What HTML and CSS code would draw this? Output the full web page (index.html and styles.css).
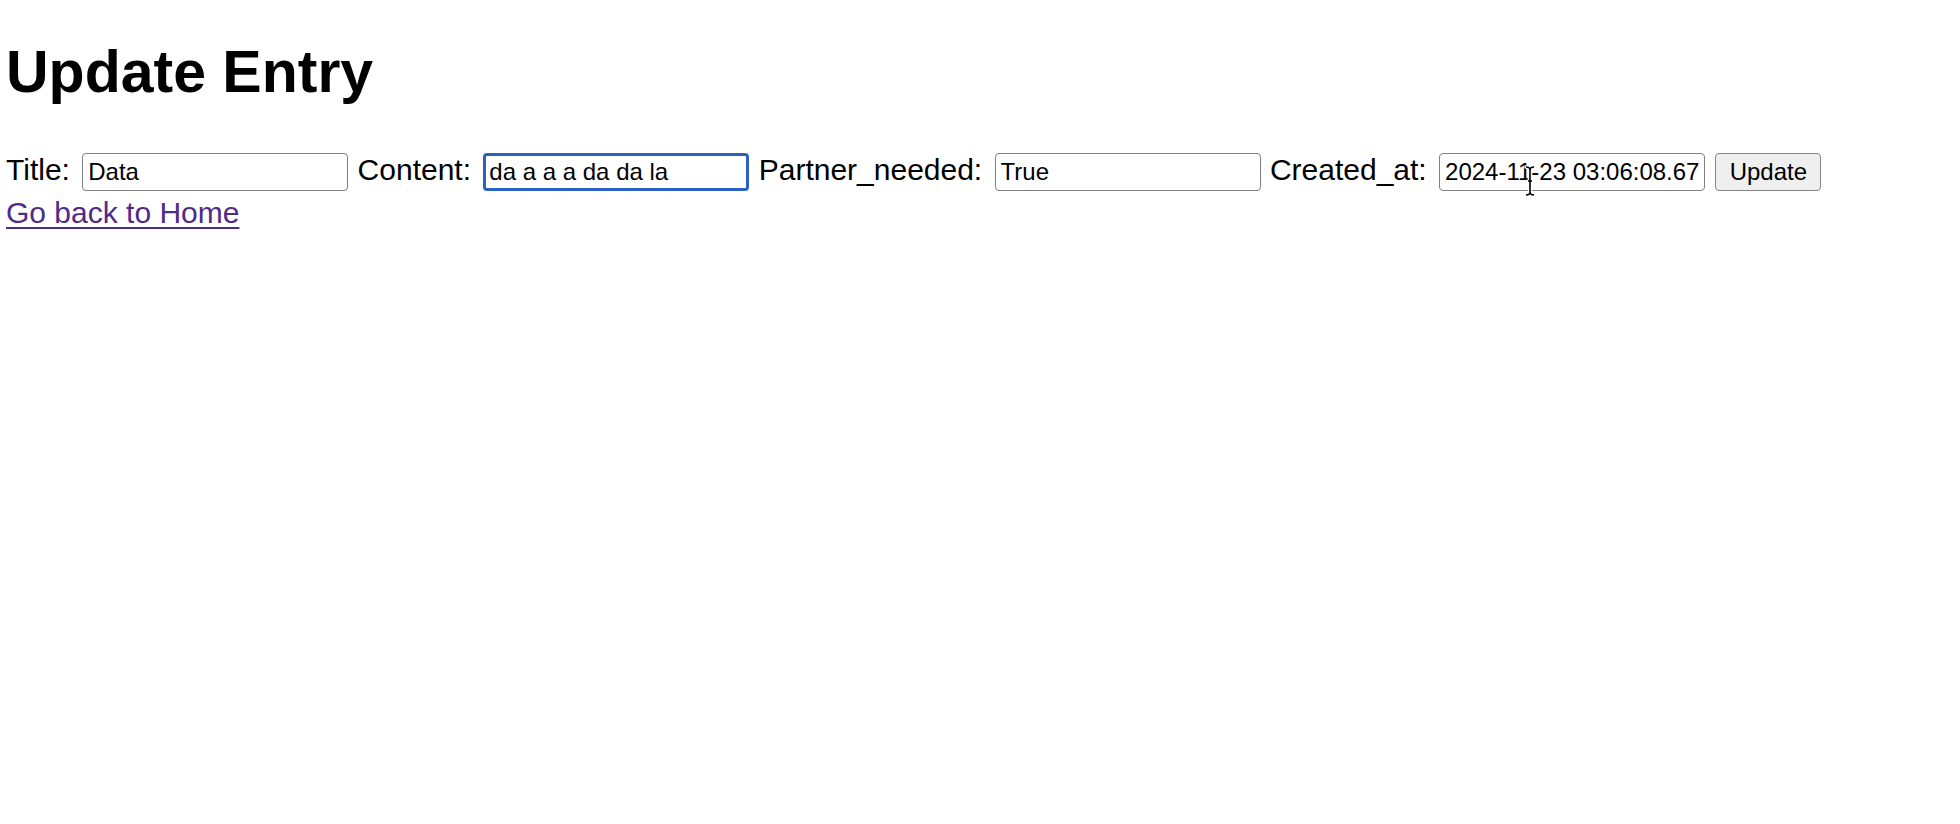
FILE: index.html
```
<!DOCTYPE html>
<html>
<head>
<meta charset="utf-8">
<title>Update Entry</title>
<link rel="stylesheet" href="styles.css">
</head>
<body>
<h1 class="title">Update Entry</h1>
<form class="entry-form">
<label class="lbl">Title:</label> <input class="field" type="text" value="Data"> <label class="lbl">Content:</label> <input class="field focused" type="text" value="da a a a da da la"> <label class="lbl">Partner_needed:</label> <input class="field" type="text" value="True"> <label class="lbl">Created_at:</label> <span class="field-wrap"><input class="field" type="text" value="2024-11-23 03:06:08.678"><svg class="cursor" width="12" height="32" viewBox="0 0 12 32"><path d="M2 2 Q6 2 6 5 Q6 2 10 2 M6 5 V27 M2 30 Q6 30 6 27 Q6 30 10 30 M4 16 H8" fill="none" stroke="#fff" stroke-width="3.5" stroke-linecap="round"/><path d="M2 2 Q6 2 6 5 Q6 2 10 2 M6 5 V27 M2 30 Q6 30 6 27 Q6 30 10 30 M4 16 H8" fill="none" stroke="#000" stroke-width="1.6"/></svg></span> <button class="btn" type="button">Update</button>
</form>
<a class="home-link" href="#">Go back to Home</a>
</body>
</html>
```
FILE: styles.css
```
html, body {
  background: #ffffff;
}
body {
  margin: 0;
  padding: 0 6px;
  font-family: "Liberation Sans", Arial, Helvetica, sans-serif;
  font-size: 30px;
  color: #000;
}
.title {
  font-size: 59px;
  font-weight: bold;
  margin: 38px 0 47px;
  line-height: normal;
}
.entry-form {
  margin: 0 0 5px;
  white-space: nowrap;
}
.lbl {
  font-size: 30px;
}
.field {
  box-sizing: border-box;
  width: 266px;
  height: 38px;
  font-family: "Liberation Sans", Arial, Helvetica, sans-serif;
  font-size: 24px;
  padding: 0 5px;
  border: 1.5px solid #808080;
  border-radius: 4px;
  background: #fff;
  color: #000;
  margin: 0 1px 0 4px;
  outline: none;
}
.field.focused {
  border: 3px solid #2c61c4;
  padding: 0 3px;
}
.field-wrap {
  position: relative;
  display: inline-block;
}
.cursor {
  position: absolute;
  left: 89px;
  top: 12px;
}
.btn {
  box-sizing: border-box;
  height: 38px;
  width: 106px;
  font-family: "Liberation Sans", Arial, Helvetica, sans-serif;
  font-size: 24px;
  background: #efefef;
  border: 1.5px solid #858585;
  border-radius: 4px;
  color: #000;
  padding: 0;
  margin: 0 0 0 1px;
}
.home-link {
  color: #4f2b86;
  text-decoration: underline;
  text-decoration-thickness: 2px;
  text-underline-offset: 4px;
}
```
